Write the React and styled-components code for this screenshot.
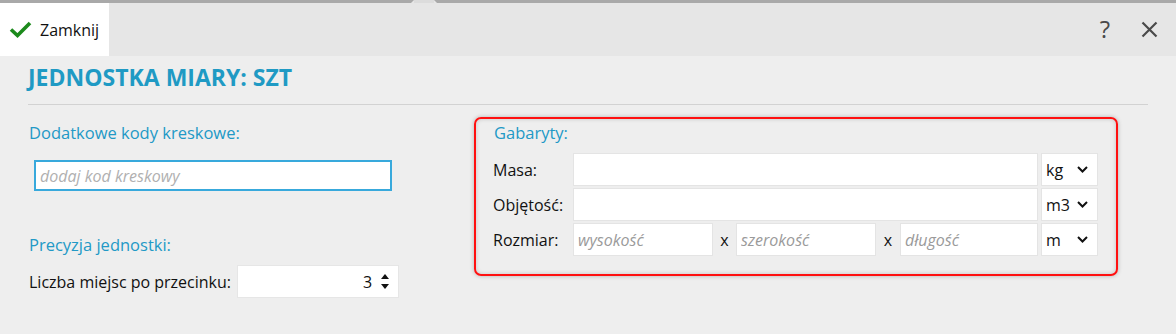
import styled, { createGlobalStyle } from "styled-components";

//#region estilos
const GlobalStyle = createGlobalStyle`
    body {
        margin: 0;
        background: #eeeeee;
        font-family: "Open Sans", "Noto Sans", sans-serif;
        color: #111;
    }
`;

const Window = styled.div`
    width: 1176px;
    height: 334px;
    background: #eeeeee;
    overflow: hidden;
`;

const TabStrip = styled.div`
    display: flex;
    height: 3px;
    background: #e6e6e6;
`;

const StripSeg = styled.div`
    background: #a9a9a9;
    width: ${(p) => (p.$w ? `${p.$w}px` : "auto")};
    flex: ${(p) => (p.$w ? "none" : 1)};
    clip-path: ${(p) =>
        p.$w
            ? "polygon(0 0, 100% 0, calc(100% - 3px) 100%, 0 100%)"
            : "polygon(0 0, 100% 0, 100% 100%, 3px 100%)"};
`;

const StripNotch = styled.div`
    width: 20px;
    background: #dcdcdc;
`;

const Toolbar = styled.div`
    display: flex;
    align-items: stretch;
    justify-content: space-between;
    height: 53px;
    background: #e6e6e6;
`;

const CloseButton = styled.button`
    display: flex;
    align-items: center;
    gap: 8px;
    width: 109px;
    padding: 0 0 0 9px;
    border: none;
    background: #ffffff;
    font-family: inherit;
    font-size: 16px;
    color: #111;
    cursor: pointer;
`;

const ToolbarRight = styled.div`
    display: flex;
    align-items: center;
    gap: 31px;
    padding-right: 18px;
`;

const HelpButton = styled.span`
    font-size: 24px;
    color: #4a4a4a;
    line-height: 1;
    margin-top: -2px;
`;

const Content = styled.div`
    padding: 0 28px;
`;

const Title = styled.h1`
    margin: 0;
    padding-top: 7px;
    font-size: 23px;
    line-height: 29px;
    font-weight: 700;
    color: #1f9ac4;
`;

const Divider = styled.hr`
    margin: 12px 0 0;
    border: none;
    border-top: 1px solid #d2d2d2;
`;

const Columns = styled.div`
    display: flex;
    margin-top: 12px;
`;

const LeftCol = styled.section`
    width: 446px;
    display: flex;
    flex-direction: column;
`;

const SectionLabel = styled.div`
    font-size: 16.5px;
    line-height: 20px;
    color: #2299c6;
    margin-top: ${(p) => p.$top || 0}px;
    padding-left: 1px;
`;

const BarcodeInput = styled.input`
    box-sizing: border-box;
    width: 358px;
    height: 31px;
    margin: 17px 0 0 6px;
    padding: 0 4px;
    border: 2px solid #38a9dc;
    background: #fff;
    font-family: inherit;
    font-size: 16px;
    outline: none;
    &::placeholder {
        color: #b0b0b0;
        font-style: italic;
    }
`;

const FieldRow = styled.div`
    display: flex;
    align-items: center;
    margin-top: 10px;
    padding-left: 1px;
`;

const FieldLabel = styled.span`
    font-size: 16px;
    color: #111;
    width: ${(p) => (p.$w ? `${p.$w}px` : "auto")};
    flex: none;
`;

const Spin = styled.div`
    display: flex;
    align-items: center;
    justify-content: flex-end;
    box-sizing: border-box;
    width: 162px;
    height: 33px;
    margin-left: 6px;
    padding-right: 9px;
    background: #fff;
    border: 1px solid #e6e6e6;
    font-size: 16px;
`;

const SpinArrows = styled.div`
    display: flex;
    flex-direction: column;
    gap: 5px;
    margin-left: 9px;
`;

const Arrow = styled.div`
    width: 0;
    height: 0;
    border-left: 4px solid transparent;
    border-right: 4px solid transparent;
    ${(p) => (p.$down ? "border-top: 5px solid #111;" : "border-bottom: 5px solid #111;")}
`;

const Gabaryty = styled.section`
    box-sizing: border-box;
    width: 644px;
    height: 159px;
    border: 2px solid #ff1010;
    border-radius: 7px;
    padding: 4px 18px 0 17px;
    box-shadow: 0 0 4px rgba(0, 0, 0, 0.25), inset 0 0 4px rgba(0, 0, 0, 0.18);
`;

const Rows = styled.div`
    display: flex;
    flex-direction: column;
    gap: 2px;
    margin-top: 10px;
`;

const Row = styled.div`
    display: flex;
    align-items: center;
    height: 33px;
`;

const Field = styled.input`
    box-sizing: border-box;
    min-width: 0;
    width: ${(p) => (p.$w ? `${p.$w}px` : "auto")};
    flex: ${(p) => (p.$w ? "none" : "1 1 0")};
    height: 33px;
    padding: 0 4px;
    border: 1px solid #e4e4e4;
    background: #fff;
    font-family: inherit;
    font-size: 16px;
    outline: none;
    &::placeholder {
        color: #9a9a9a;
        font-style: italic;
    }
`;

const Times = styled.span`
    flex: none;
    width: ${(p) => p.$w}px;
    text-align: center;
    font-size: 16px;
    color: #111;
`;

const UnitSelect = styled.div`
    flex: none;
    display: flex;
    align-items: center;
    justify-content: space-between;
    box-sizing: border-box;
    width: 57px;
    height: 33px;
    margin-left: 3px;
    padding: 0 9px 0 4px;
    background: #fff;
    border: 1px solid #e4e4e4;
    font-size: 16px;
`;
//#endregion

function CheckIcon() {
    return (
        <svg width="23" height="17" viewBox="0 0 23 17">
            <path d="M2 8.5 L8.5 14.5 L21 2" fill="none" stroke="#1c8a1c" strokeWidth="3.6" />
        </svg>
    );
}

function CloseIcon() {
    return (
        <svg width="17" height="17" viewBox="0 0 17 17">
            <path d="M1.5 1.5 L15.5 15.5 M15.5 1.5 L1.5 15.5" stroke="#4a4a4a" strokeWidth="2.2" />
        </svg>
    );
}

function Chevron() {
    return (
        <svg width="11" height="7" viewBox="0 0 11 7">
            <path d="M1 1 L5.5 5.5 L10 1" fill="none" stroke="#111" strokeWidth="2" />
        </svg>
    );
}

function Unit({ value }) {
    return (
        <UnitSelect>
            <span>{value}</span>
            <Chevron />
        </UnitSelect>
    );
}

function App() {
    return (
        <Window>
            <GlobalStyle />
            <TabStrip>
                <StripSeg $w={414} />
                <StripNotch />
                <StripSeg />
            </TabStrip>
            <Toolbar>
                <CloseButton>
                    <CheckIcon />
                    Zamknij
                </CloseButton>
                <ToolbarRight>
                    <HelpButton>?</HelpButton>
                    <CloseIcon />
                </ToolbarRight>
            </Toolbar>
            <Content>
                <Title>JEDNOSTKA MIARY: SZT</Title>
                <Divider />
                <Columns>
                    <LeftCol>
                        <SectionLabel $top={6}>Dodatkowe kody kreskowe:</SectionLabel>
                        <BarcodeInput placeholder="dodaj kod kreskowy" />
                        <SectionLabel $top={44}>Precyzja jednostki:</SectionLabel>
                        <FieldRow>
                            <FieldLabel>Liczba miejsc po przecinku:</FieldLabel>
                            <Spin>
                                3
                                <SpinArrows>
                                    <Arrow />
                                    <Arrow $down />
                                </SpinArrows>
                            </Spin>
                        </FieldRow>
                    </LeftCol>
                    <Gabaryty>
                        <SectionLabel>Gabaryty:</SectionLabel>
                        <Rows>
                            <Row>
                                <FieldLabel $w={80}>Masa:</FieldLabel>
                                <Field />
                                <Unit value="kg" />
                            </Row>
                            <Row>
                                <FieldLabel $w={80}>Objętość:</FieldLabel>
                                <Field />
                                <Unit value="m3" />
                            </Row>
                            <Row>
                                <FieldLabel $w={80}>Rozmiar:</FieldLabel>
                                <Field $w={140} placeholder="wysokość" />
                                <Times $w={23}>x</Times>
                                <Field $w={140} placeholder="szerokość" />
                                <Times $w={24}>x</Times>
                                <Field placeholder="długość" />
                                <Unit value="m" />
                            </Row>
                        </Rows>
                    </Gabaryty>
                </Columns>
            </Content>
        </Window>
    );
}

export default App;
